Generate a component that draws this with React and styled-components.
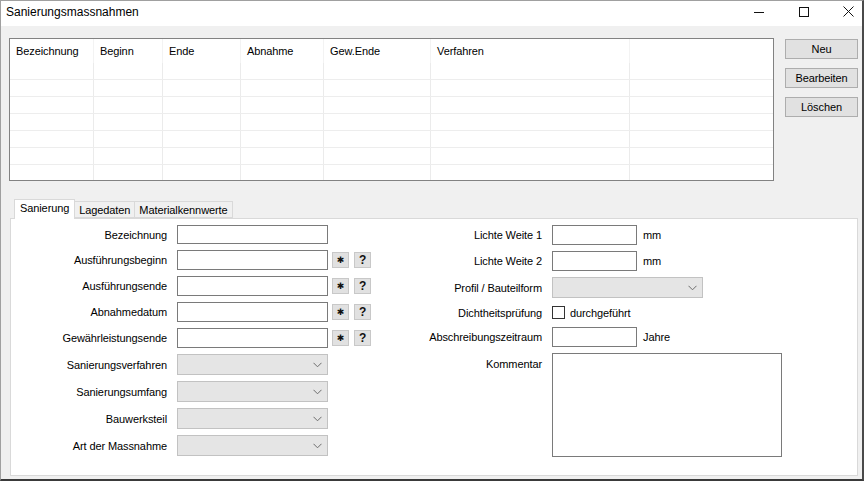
import styled, { createGlobalStyle } from "styled-components";

const GlobalStyle = createGlobalStyle`
  html, body {
    margin: 0;
    padding: 0;
    background: #ffffff;
  }
  * {
    box-sizing: border-box;
  }
`;

const columns = [
  { title: "Bezeichnung", width: 84 },
  { title: "Beginn", width: 69 },
  { title: "Ende", width: 78 },
  { title: "Abnahme", width: 83 },
  { title: "Gew.Ende", width: 107 },
  { title: "Verfahren", width: 199 },
  { title: "", width: 143 },
];

const Window = styled.div`
  width: 864px;
  height: 481px;
  display: flex;
  flex-direction: column;
  border-left: 1px solid #a0a0a0;
  border-top: 1px solid #a0a0a0;
  border-right: 2px solid #4a4a4a;
  border-bottom: 2px solid #3a3a3a;
  font-family: "Liberation Sans", Arial, sans-serif;
  font-size: 11px;
  letter-spacing: -0.1px;
  color: #000;
  overflow: hidden;
`;

const TitleBar = styled.div`
  height: 25px;
  flex: none;
  background: #fff;
  display: flex;
  align-items: center;
  padding-left: 5px;
  margin-right: -9px;
`;

const Title = styled.div`
  flex: 1;
  font-size: 12px;
  letter-spacing: 0;
  margin-top: -4px;
`;

const WinControl = styled.div`
  width: 45px;
  height: 25px;
  display: flex;
  align-items: center;
  justify-content: center;
  margin-top: -4px;
  color: #111;
`;

const Body = styled.div`
  flex: 1;
  background: #f0f0f0;
  padding: 12px 0 0 8px;
  display: flex;
  flex-direction: column;
`;

const TopArea = styled.div`
  display: flex;
  gap: 11px;
`;

const Grid = styled.div`
  width: 765px;
  height: 143px;
  background: #fff;
  border: 1px solid #828282;
  overflow: hidden;
`;

const GridRow = styled.div`
  display: flex;
  height: ${({ header }) => (header ? "24px" : "17px")};
  border-bottom: ${({ header }) => (header ? "none" : "1px solid #ededed")};
`;

const Cell = styled.div`
  flex: none;
  width: ${({ w }) => w}px;
  padding: 6px 0 0 6px;
  border-right: 1px solid ${({ header }) => (header ? "#f3f3f3" : "#ebebeb")};
  white-space: nowrap;

  &:last-child {
    border-right: none;
  }
`;

const SideButtons = styled.div`
  display: flex;
  flex-direction: column;
  gap: 9px;
  padding-top: 1px;
`;

const Button = styled.button`
  width: 73px;
  height: 20px;
  padding: 0;
  background: #e1e1e1;
  border: 1px solid #adadad;
  font-family: inherit;
  font-size: 11px;
  letter-spacing: inherit;
  color: #000;
`;

const Tabs = styled.div`
  margin-top: 18px;
  margin-left: 1px;
  display: flex;
  align-items: flex-end;
  padding-left: 4px;
  height: 19px;
  position: relative;
  z-index: 1;
`;

const Tab = styled.div`
  height: ${({ active }) => (active ? "20px" : "17px")};
  padding: ${({ active }) => (active ? "2px 5px 0 5px" : "2px 4px 0 4px")};
  background: ${({ active }) => (active ? "#fff" : "#f0f0f0")};
  border: 1px solid #d9d9d9;
  border-bottom: ${({ active }) => (active ? "none" : "1px solid #d9d9d9")};
  margin-left: ${({ active, first }) => (active || first ? "0" : "-1px")};
  margin-bottom: ${({ active }) => (active ? "-1px" : "0")};
  white-space: nowrap;
`;

const Panel = styled.div`
  width: 848px;
  height: 258px;
  margin-left: 1px;
  background: #fff;
  border: 1px solid #d9d9d9;
  display: flex;
  padding-top: 6px;
`;

const Form = styled.div`
  display: grid;
  grid-template-columns: ${({ cols }) => cols};
  column-gap: 10px;
  row-gap: 6px;
  align-content: start;
  margin-left: ${({ offset }) => offset}px;
`;

const Label = styled.div`
  text-align: right;
  align-self: ${({ top }) => (top ? "start" : "center")};
  padding-top: ${({ top }) => (top ? "5px" : "0")};
  white-space: nowrap;
`;

const TextBox = styled.div`
  width: ${({ w }) => w}px;
  height: ${({ h }) => h || 20}px;
  background: #fff;
  border: 1px solid #7a7a7a;
`;

const Combo = styled.div`
  width: ${({ w }) => w}px;
  height: 21px;
  background: #e5e5e5;
  border: 1px solid #c2c2c2;
  display: flex;
  align-items: center;
  justify-content: flex-end;
  padding-right: 5px;
`;

const Inline = styled.div`
  display: flex;
  align-items: center;
  gap: ${({ gap }) => gap}px;
  height: ${({ h }) => (h ? `${h}px` : "auto")};
`;

const SmallButton = styled.div`
  width: 17px;
  height: 16px;
  background: #e1e1e1;
  border: 1px solid #c8c8c8;
  display: flex;
  align-items: center;
  justify-content: center;
  font-family: ${({ glyph }) => (glyph ? '"DejaVu Sans", sans-serif' : "inherit")};
  font-weight: bold;
  font-size: ${({ glyph }) => (glyph ? "9px" : "12px")};
  color: #111;
`;

const Checkbox = styled.div`
  width: 13px;
  height: 13px;
  background: #fff;
  border: 1px solid #333;
`;

const Chevron = () => (
  <svg width="9" height="6" viewBox="0 0 9 6">
    <path d="M0.5 0.8 L4.5 4.8 L8.5 0.8" fill="none" stroke="#6d6d6d" strokeWidth="1" />
  </svg>
);

const leftRows = [
  { label: "Bezeichnung", kind: "text" },
  { label: "Ausführungsbeginn", kind: "date" },
  { label: "Ausführungsende", kind: "date" },
  { label: "Abnahmedatum", kind: "date" },
  { label: "Gewährleistungsende", kind: "date" },
  { label: "Sanierungsverfahren", kind: "combo" },
  { label: "Sanierungsumfang", kind: "combo" },
  { label: "Bauwerksteil", kind: "combo" },
  { label: "Art der Massnahme", kind: "combo" },
];

function LeftField({ kind }) {
  if (kind === "combo") {
    return (
      <Combo w={151}>
        <Chevron />
      </Combo>
    );
  }
  if (kind === "date") {
    return (
      <Inline gap={4}>
        <TextBox w={151} />
        <Inline gap={5}>
          <SmallButton glyph>✱</SmallButton>
          <SmallButton>?</SmallButton>
        </Inline>
      </Inline>
    );
  }
  return <TextBox w={151} h={19} />;
}

function FieldRow({ label, children }) {
  return (
    <>
      <Label>{label}</Label>
      {children}
    </>
  );
}

export default function App() {
  return (
    <>
      <GlobalStyle />
      <Window>
        <TitleBar>
          <Title>Sanierungsmassnahmen</Title>
          <WinControl>
            <svg width="10" height="10" viewBox="0 0 10 10">
              <path d="M0 5.5 H10" stroke="#111" strokeWidth="1" />
            </svg>
          </WinControl>
          <WinControl>
            <svg width="10" height="10" viewBox="0 0 10 10">
              <rect x="0.5" y="0.5" width="9" height="9" fill="none" stroke="#111" strokeWidth="1" />
            </svg>
          </WinControl>
          <WinControl>
            <svg width="11" height="11" viewBox="0 0 11 11">
              <path d="M0.5 0.5 L10.5 10.5 M10.5 0.5 L0.5 10.5" stroke="#111" strokeWidth="1" />
            </svg>
          </WinControl>
        </TitleBar>

        <Body>
          <TopArea>
            <Grid>
              <GridRow header>
                {columns.map((c, i) => (
                  <Cell key={i} w={c.width} header>
                    {c.title}
                  </Cell>
                ))}
              </GridRow>
              {Array.from({ length: 7 }).map((_, r) => (
                <GridRow key={r}>
                  {columns.map((c, i) => (
                    <Cell key={i} w={c.width} />
                  ))}
                </GridRow>
              ))}
            </Grid>
            <SideButtons>
              <Button>Neu</Button>
              <Button>Bearbeiten</Button>
              <Button>Löschen</Button>
            </SideButtons>
          </TopArea>

          <Tabs>
            <Tab active>Sanierung</Tab>
            <Tab>Lagedaten</Tab>
            <Tab>Materialkennwerte</Tab>
          </Tabs>
          <Panel>
            <Form cols="156px auto" offset={0}>
              {leftRows.map((row) => (
                <FieldRow key={row.label} label={row.label}>
                  <LeftField kind={row.kind} />
                </FieldRow>
              ))}
            </Form>

            <Form cols="160px auto" offset={11}>
              <Label>Lichte Weite 1</Label>
              <Inline gap={6}>
                <TextBox w={85} />
                <span>mm</span>
              </Inline>
              <Label>Lichte Weite 2</Label>
              <Inline gap={6}>
                <TextBox w={85} />
                <span>mm</span>
              </Inline>
              <Label>Profil / Bauteilform</Label>
              <Combo w={151}>
                <Chevron />
              </Combo>
              <Label>Dichtheitsprüfung</Label>
              <Inline gap={5} h={17}>
                <Checkbox />
                <span>durchgeführt</span>
              </Inline>
              <Label>Abschreibungszeitraum</Label>
              <Inline gap={6}>
                <TextBox w={85} />
                <span>Jahre</span>
              </Inline>
              <Label top>Kommentar</Label>
              <TextBox w={230} h={104} />
            </Form>
          </Panel>
        </Body>
      </Window>
    </>
  );
}
